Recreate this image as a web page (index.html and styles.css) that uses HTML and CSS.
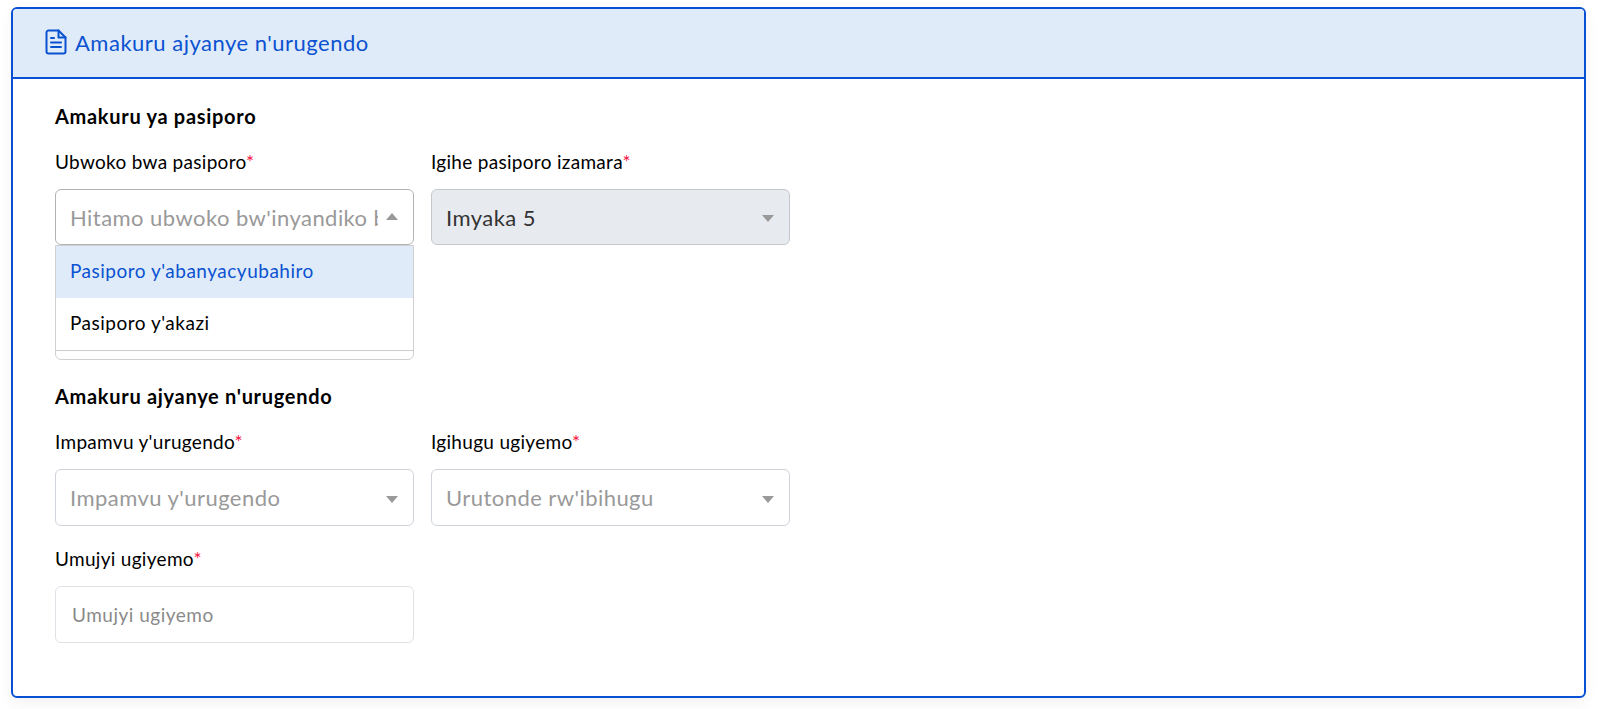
FILE: index.html
```html
<!DOCTYPE html>
<html lang="rw">
<head>
<meta charset="utf-8">
<title>Amakuru ajyanye n'urugendo</title>
<link rel="stylesheet" href="styles.css">
</head>
<body>
<section class="card">
  <header class="card-head">
    <svg class="doc-icon" viewBox="0 0 22 26" width="22" height="26" fill="none" stroke="currentColor" stroke-width="2" stroke-linejoin="round" stroke-linecap="round">
      <path d="M3.5 1.5H13.5L20.5 8.5V22.5a2 2 0 0 1-2 2H3.5a2 2 0 0 1-2-2V3.5a2 2 0 0 1 2-2Z"/>
      <path d="M13.5 1.5V8.5H20.5"/>
      <path d="M6 9H9M6 13.5H16M6 18H16"/>
    </svg>
    <h2 class="card-title">Amakuru ajyanye n'urugendo</h2>
  </header>
  <div class="card-body">
    <h3 class="section-title">Amakuru ya pasiporo</h3>
    <div class="form-row passport-row">
      <div class="field">
        <label class="label">Ubwoko bwa pasiporo<span class="req">*</span></label>
        <div class="select open">
          <span class="select-text placeholder">Hitamo ubwoko bw'inyandiko bw</span>
          <span class="arrow up"></span>
        </div>
        <div class="menu">
          <ul class="menu-list">
            <li class="menu-item active">Pasiporo y'abanyacyubahiro</li>
            <li class="menu-item">Pasiporo y'akazi</li>
          </ul>
        </div>
      </div>
      <div class="field">
        <label class="label">Igihe pasiporo izamara<span class="req">*</span></label>
        <div class="select disabled">
          <span class="select-text">Imyaka 5</span>
          <span class="arrow"></span>
        </div>
      </div>
    </div>
    <h3 class="section-title">Amakuru ajyanye n'urugendo</h3>
    <div class="form-row">
      <div class="field">
        <label class="label">Impamvu y'urugendo<span class="req">*</span></label>
        <div class="select tall">
          <span class="select-text placeholder">Impamvu y'urugendo</span>
          <span class="arrow"></span>
        </div>
      </div>
      <div class="field">
        <label class="label">Igihugu ugiyemo<span class="req">*</span></label>
        <div class="select tall">
          <span class="select-text placeholder">Urutonde rw'ibihugu</span>
          <span class="arrow"></span>
        </div>
      </div>
    </div>
    <div class="form-row city-row">
      <div class="field">
        <label class="label">Umujyi ugiyemo<span class="req">*</span></label>
        <input class="input" type="text" placeholder="Umujyi ugiyemo">
      </div>
    </div>
  </div>
</section>
</body>
</html>
```
FILE: styles.css
```css
* { box-sizing: border-box; }
html, body { height: 100%; }
body {
  margin: 0;
  padding: 7px 14px 0 11px;
  background: #fff;
  font-family: "Lato", "Open Sans", sans-serif;
  color: #000;
  overflow: hidden;
}
.card {
  height: 691px;
  border: 2px solid #0a50d4;
  border-radius: 6px;
  box-shadow: 0 6px 14px rgba(0, 0, 0, .05);
  overflow: hidden;
}
.card-head {
  display: flex;
  align-items: center;
  gap: 8px;
  height: 70px;
  padding: 0 0 2px 32px;
  background: #dfebf8;
  border-bottom: 2px solid #0a50d4;
  color: #0b52d1;
}
.doc-icon { flex: none; }
.card-title {
  margin: 0;
  font-size: 22px;
  font-weight: 400;
  letter-spacing: .5px;
}
.card-body { padding: 25px 0 0 42px; }
.section-title {
  margin: 0;
  font-size: 20px;
  line-height: 24px;
  font-weight: 700;
  letter-spacing: .7px;
}
.form-row {
  display: grid;
  grid-template-columns: 359px 359px;
  column-gap: 17px;
  margin-top: 22px;
}
.passport-row { margin-bottom: 139px; }
.city-row { margin-top: 21px; }
.field { position: relative; }
.label {
  display: block;
  height: 24px;
  margin-bottom: 15px;
  font-size: 19px;
  line-height: 24px;
  letter-spacing: .3px;
}
.req { color: #f5113f; }
.select {
  display: flex;
  align-items: center;
  height: 56px;
  padding: 0 15px 0 14px;
  background: #fff;
  border: 1px solid #ced4da;
  border-radius: 6px;
}
.select.tall { height: 57px; }
.select.open { border-color: #b3b3b3; }
.select.disabled { background: #e7eaee; border-color: #c4c8cc; }
.select-text {
  flex: 1;
  min-width: 0;
  overflow: hidden;
  white-space: nowrap;
  font-size: 22px;
  letter-spacing: .45px;
  color: #333;
}
.select-text.placeholder { color: #999; }
.arrow {
  flex: none;
  margin: 3px 0 0 8px;
  border-style: solid;
  border-width: 7px 6px 0;
  border-color: #999 transparent transparent;
}
.arrow.up {
  margin-top: -2px;
  border-width: 0 6px 7px;
  border-color: transparent transparent #999;
}
.menu {
  position: absolute;
  top: 95px;
  left: 0;
  right: 0;
  height: 115px;
  background: #fff;
  border: 1px solid #d0d0d0;
  border-radius: 0 0 6px 6px;
}
.menu-list {
  list-style: none;
  margin: 0;
  padding: 0;
  height: 105px;
  border-bottom: 1px solid #ccc;
}
.menu-item {
  height: 52px;
  padding: 0 14px;
  font-size: 19px;
  line-height: 50px;
  letter-spacing: .5px;
}
.menu-item.active { height: 52px; background: #dfebf8; color: #0b52d1; }
.input {
  display: block;
  width: 100%;
  height: 57px;
  padding: 0 16px;
  border: 1px solid #dee2e6;
  border-radius: 6px;
  font: inherit;
  font-size: 19px;
  letter-spacing: .5px;
  outline: none;
}
.input::placeholder { color: #8a8a8a; opacity: 1; }
```
